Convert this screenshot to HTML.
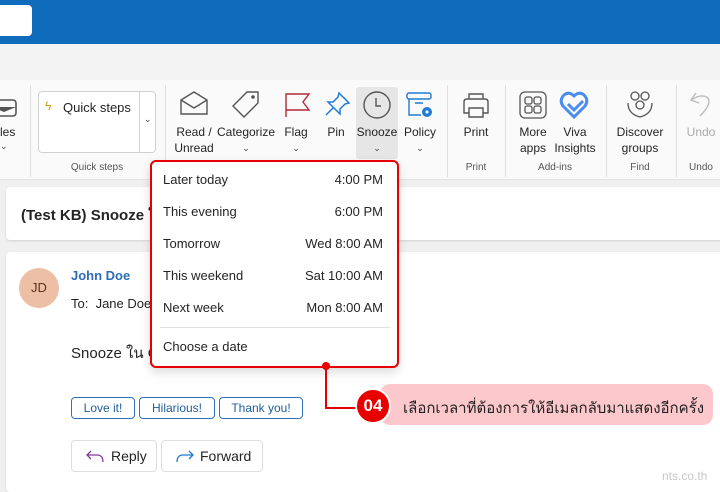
<!DOCTYPE html>
<html><head><meta charset="utf-8"><style>
*{box-sizing:border-box;margin:0;padding:0}
body{width:720px;height:486px;overflow:hidden;background:#f0f0f0;font-family:"Liberation Sans","Noto Sans CJK SC",sans-serif;position:relative;color:#242424}
.a{position:absolute}
.t{font-size:12px;color:#242424;text-align:center;line-height:16px}
.sep{position:absolute;top:85px;width:1px;height:92px;background:#e0e0e0}
.gl{position:absolute;top:162px;font-size:10px;color:#555;text-align:center}
.chev{font-size:9px;color:#444}
.mi{position:absolute;left:163px;width:220px;font-size:13px;color:#242424;display:flex;justify-content:space-between}
.rb{position:absolute;top:397px;height:22px;border:1px solid #2b73b5;border-radius:4px;font-size:12px;color:#1e5d98;text-align:center;line-height:20px;background:#fff}
.btn{position:absolute;top:440px;height:32px;border:1px solid #ddd;border-radius:4px;background:#fff;font-size:14px;line-height:30px}
</style></head><body>
<div class="a" style="left:0;top:0;width:720px;height:44px;background:#0f6cbd"></div>
<div class="a" style="left:-6px;top:5px;width:38px;height:31px;background:#fff;border-radius:4px"></div>
<div class="a" style="left:0;top:44px;width:720px;height:36px;background:#f3f3f3"></div>
<div class="a" style="left:0;top:80px;width:720px;height:100px;background:#fafafa;border-bottom:1px solid #e4e4e4"></div>

<!-- left partial -->
<svg class="a" style="left:0;top:96px" width="18" height="24"><rect x="-8" y="4" width="24" height="16" rx="3" fill="none" stroke="#555" stroke-width="1.6"/><path d="M-8 11 L4 16 L16 11" fill="#555"/></svg>
<div class="a t" style="left:0;top:124px">les</div>
<div class="a chev" style="left:0;top:141px">⌄</div>
<div class="sep" style="left:30px"></div>
<!-- quick steps -->
<div class="a" style="left:38px;top:91px;width:118px;height:62px;border:1px solid #d1d1d1;border-radius:4px;background:#fff"></div>
<div class="a" style="left:139px;top:91px;width:1px;height:62px;background:#d1d1d1"></div>
<div class="a" style="left:45px;top:99px;font-size:12px;color:#d4a017">ϟ</div>
<div class="a" style="left:63px;top:100px;font-size:13px">Quick steps</div>
<div class="a chev" style="left:144px;top:114px">⌄</div>
<div class="gl" style="left:60px;width:74px">Quick steps</div>
<div class="sep" style="left:165px"></div>
<!-- read/unread -->
<svg class="a" style="left:179px;top:90px" width="30" height="26"><path d="M2 10 L15 2 L28 10 V24 H2 Z M2 10 L15 18 L28 10" fill="none" stroke="#555" stroke-width="1.4"/></svg>
<div class="a t" style="left:170px;top:124px;width:48px">Read /<br>Unread</div>
<svg class="a" style="left:231px;top:90px" width="30" height="28"><path d="M16 2 H27 V13 L13 27 L2 16 Z" fill="none" stroke="#555" stroke-width="1.4"/><circle cx="22" cy="7" r="1.8" fill="#555"/></svg>
<div class="a t" style="left:216px;top:124px;width:60px">Categorize</div>
<div class="a chev t" style="left:216px;top:140px;width:60px">⌄</div>
<svg class="a" style="left:284px;top:92px" width="28" height="26"><path d="M2 25 V2 H25 L19 10 L25 18 H2" fill="none" stroke="#b3273b" stroke-width="1.4"/></svg>
<div class="a t" style="left:280px;top:124px;width:32px">Flag</div>
<div class="a chev t" style="left:280px;top:140px;width:32px">⌄</div>
<svg class="a" style="left:324px;top:90px" width="28" height="28"><path d="M15 3 L25 13 L21 14 L16 19 L16 24 L4 12 L9 12 L14 7 Z M9 18 L2 25" fill="none" stroke="#1f7ad6" stroke-width="1.5"/></svg>
<div class="a t" style="left:320px;top:124px;width:32px">Pin</div>
<!-- snooze -->
<div class="a" style="left:356px;top:87px;width:42px;height:72px;background:#e6e6e6;border-radius:3px"></div>
<svg class="a" style="left:362px;top:90px" width="30" height="30"><circle cx="15" cy="15" r="13" fill="none" stroke="#555" stroke-width="1.4"/><path d="M14 8 V16 H19" fill="none" stroke="#555" stroke-width="1.4"/></svg>
<div class="a t" style="left:356px;top:124px;width:42px">Snooze</div>
<div class="a chev t" style="left:356px;top:140px;width:42px">⌄</div>
<svg class="a" style="left:405px;top:90px" width="30" height="30"><rect x="2" y="3" width="24" height="6" rx="2" fill="none" stroke="#1f7ad6" stroke-width="1.4"/><path d="M4 9 V25 H16 M10 13 H18" fill="none" stroke="#1f7ad6" stroke-width="1.4"/><circle cx="22" cy="22" r="5" fill="#1f7ad6"/><circle cx="22" cy="22" r="1.6" fill="#fff"/></svg>
<div class="a t" style="left:400px;top:124px;width:40px">Policy</div>
<div class="a chev t" style="left:400px;top:140px;width:40px">⌄</div>
<div class="sep" style="left:447px"></div>
<svg class="a" style="left:461px;top:91px" width="30" height="28"><path d="M8 8 V3 H22 V8 M8 22 H3 V11 Q3 8 6 8 H24 Q27 8 27 11 V22 H22 M8 17 H22 V26 H8 Z" fill="none" stroke="#555" stroke-width="1.4"/></svg>
<div class="a t" style="left:458px;top:124px;width:36px">Print</div>
<div class="gl" style="left:458px;width:36px">Print</div>
<div class="sep" style="left:505px"></div>
<svg class="a" style="left:519px;top:91px" width="28" height="28"><rect x="1" y="1" width="26" height="26" rx="5" fill="none" stroke="#555" stroke-width="1.3"/><rect x="6" y="6" width="7" height="7" rx="2" fill="none" stroke="#555" stroke-width="1.3"/><rect x="15" y="6" width="7" height="7" rx="2" fill="none" stroke="#555" stroke-width="1.3"/><rect x="6" y="15" width="7" height="7" rx="2" fill="none" stroke="#555" stroke-width="1.3"/><rect x="15" y="15" width="7" height="7" rx="2" fill="none" stroke="#555" stroke-width="1.3"/></svg>
<div class="a t" style="left:513px;top:124px;width:40px">More<br>apps</div>
<svg class="a" style="left:559px;top:90px" width="30" height="30"><path d="M15 27 L4 16 Q0 10 5 5 Q10 1 15 6 Q20 1 25 5 Q30 10 26 16 Z M9 14 L15 20 L24 11" fill="none" stroke="#4a8df0" stroke-width="3"/></svg>
<div class="a t" style="left:552px;top:124px;width:46px">Viva<br>Insights</div>
<div class="gl" style="left:530px;width:50px">Add-ins</div>
<div class="sep" style="left:606px"></div>
<svg class="a" style="left:625px;top:90px" width="30" height="30"><circle cx="10" cy="6" r="4" fill="none" stroke="#555" stroke-width="1.3"/><circle cx="20" cy="6" r="4" fill="none" stroke="#555" stroke-width="1.3"/><circle cx="15" cy="15" r="4" fill="none" stroke="#555" stroke-width="1.3"/><path d="M3 13 Q3 24 15 27 Q27 24 27 13" fill="none" stroke="#555" stroke-width="1.3"/></svg>
<div class="a t" style="left:614px;top:124px;width:52px">Discover<br>groups</div>
<div class="gl" style="left:620px;width:40px">Find</div>
<div class="sep" style="left:676px"></div>
<svg class="a" style="left:688px;top:90px" width="28" height="30"><path d="M8 3 L3 10 L11 13 M3 10 Q14 3 20 8 Q24 14 12 26" fill="none" stroke="#bbb" stroke-width="1.4"/></svg>
<div class="a t" style="left:684px;top:124px;width:34px;color:#aaa">Undo</div>
<div class="gl" style="left:684px;width:34px">Undo</div>

<!-- subject card -->
<div class="a" style="left:6px;top:187px;width:720px;height:53px;background:#fff;border-radius:4px;box-shadow:0 1px 2px rgba(0,0,0,.12)"></div>
<div class="a" style="left:21px;top:203px;font-size:15px;font-weight:bold;color:#242424">(Test KB) Snooze ใ</div>
<!-- mail card -->
<div class="a" style="left:6px;top:252px;width:720px;height:240px;background:#fff;border-radius:4px;box-shadow:0 1px 2px rgba(0,0,0,.12)"></div>
<div class="a" style="left:19px;top:268px;width:40px;height:40px;border-radius:50%;background:#ecbfa6;font-size:13px;color:#5a3418;text-align:center;line-height:40px">JD</div>
<div class="a" style="left:71px;top:268px;font-size:13px;font-weight:bold;color:#2d6db5">John Doe</div>
<div class="a" style="left:71px;top:296px;font-size:13px">To:&nbsp; Jane Doe</div>
<div class="a" style="left:71px;top:341px;font-size:15px">Snooze ใน O</div>
<div class="rb" style="left:71px;width:64px">Love it!</div>
<div class="rb" style="left:139px;width:76px">Hilarious!</div>
<div class="rb" style="left:219px;width:84px">Thank you!</div>
<div class="btn" style="left:71px;width:86px"><svg class="a" style="left:13px;top:8px" width="20" height="14"><path d="M6 2 L2 6 L6 10 M2 6 H12 Q18 6 18 13" fill="none" stroke="#8a3b9e" stroke-width="1.3"/></svg><span class="a" style="left:39px;top:0">Reply</span></div>
<div class="btn" style="left:161px;width:102px"><svg class="a" style="left:13px;top:8px" width="20" height="14"><path d="M14 2 L18 6 L14 10 M18 6 H8 Q2 6 2 13" fill="none" stroke="#1f7ad6" stroke-width="1.3"/></svg><span class="a" style="left:38px;top:0">Forward</span></div>

<!-- dropdown -->
<div class="a" style="left:150px;top:160px;width:249px;height:208px;background:#fff;border:2px solid #e80000;border-radius:6px;box-shadow:0 4px 10px rgba(0,0,0,.15)"></div>
<div class="mi" style="top:172px"><span>Later today</span><span>4:00 PM</span></div>
<div class="mi" style="top:204px"><span>This evening</span><span>6:00 PM</span></div>
<div class="mi" style="top:236px"><span>Tomorrow</span><span>Wed 8:00 AM</span></div>
<div class="mi" style="top:268px"><span>This weekend</span><span>Sat 10:00 AM</span></div>
<div class="mi" style="top:300px"><span>Next week</span><span>Mon 8:00 AM</span></div>
<div class="a" style="left:160px;top:327px;width:230px;height:1px;background:#e0e0e0"></div>
<div class="mi" style="top:339px"><span>Choose a date</span></div>
<!-- callout -->
<div class="a" style="left:322px;top:362px;width:8px;height:8px;border-radius:50%;background:#e80000"></div>
<div class="a" style="left:325px;top:366px;width:2px;height:43px;background:#e80000"></div>
<div class="a" style="left:325px;top:407px;width:35px;height:2px;background:#e80000"></div>
<div class="a" style="left:380px;top:384px;width:333px;height:41px;background:#fcc8cc;border-radius:10px"></div>
<div class="a" style="left:355px;top:388px;width:36px;height:36px;border-radius:50%;background:#e80000;border:2px solid #fff;color:#fff;font-weight:bold;font-size:17px;text-align:center;line-height:32px">04</div>
<div class="a" style="left:403px;top:396px;font-size:15px;color:#222;font-family:'Liberation Sans','Noto Sans CJK SC','WenQuanYi Zen Hei',sans-serif">เลือกเวลาที่ต้องการให้อีเมลกลับมาแสดงอีกครั้ง</div>
<div class="a" style="left:662px;top:469px;font-size:12px;color:#c8c8c8">nts.co.th</div>
</body></html>
